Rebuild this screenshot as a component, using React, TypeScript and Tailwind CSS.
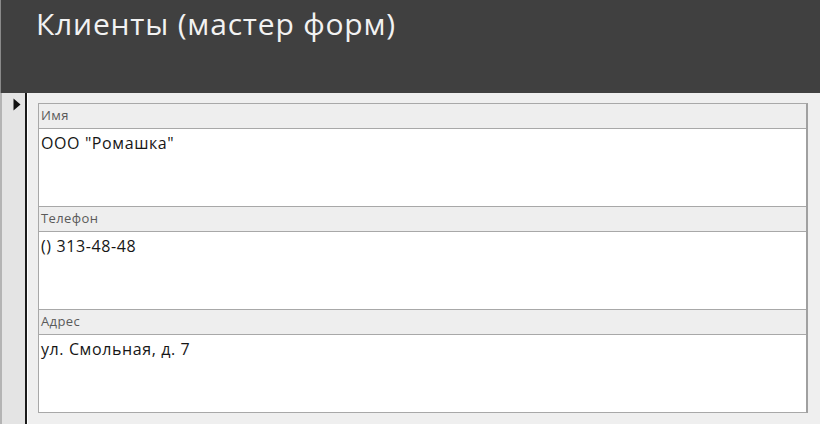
import React from 'react';

type Field = { label: string; value: string };

const fields: Field[] = [
  { label: 'Имя', value: 'ООО "Ромашка"' },
  { label: 'Телефон', value: '() 313-48-48' },
  { label: 'Адрес', value: 'ул. Смольная, д. 7' },
];

const FieldBlock = ({ label, value }: Field) => (
  <div>
    <div className="h-[25px] border-b border-[#a8a8a8] bg-[#eeeeee] pl-[2px] pt-[3px] text-[13px] leading-[17px] tracking-[0.4px] text-[#5a5a5a]">
      {label}
    </div>
    <div className="h-[78px] border-b border-[#a8a8a8] bg-white pl-[2px] pt-[4px] text-[16px] leading-[20px] tracking-[0.6px] text-[#161616]">
      {value}
    </div>
  </div>
);

export default function App() {
  return (
    <div
      className="flex h-[424px] w-[820px] flex-col overflow-hidden bg-[#efefef]"
      style={{ fontFamily: '"Open Sans", "Noto Sans", sans-serif' }}
    >
      {/* Form header */}
      <div className="h-[93px] shrink-0 border-l border-[#8a8a8a] bg-[#404040] pl-[35px] pt-[4px]">
        <h1 className="text-[30px] leading-[40px] font-normal tracking-[0.8px] text-[#f2f2f2]">
          Клиенты (мастер форм)
        </h1>
      </div>

      <div className="flex flex-1">
        {/* Record selector */}
        <div className="w-[27px] shrink-0 border-l-2 border-r-2 border-l-[#b4b4b4] border-r-[#1a1a1a] bg-[#e4e4e4] pl-[11px] pt-[5px]">
          <svg width="8" height="13" viewBox="0 0 8 13">
            <path d="M0.5 0.5 L7.5 6.5 L0.5 12.5 Z" fill="#111" />
          </svg>
        </div>

        {/* Detail */}
        <div className="flex-1 border-l border-white pl-[10px] pt-[10px]">
          <div className="w-[770px] border-t border-l border-[#a8a8a8] border-r-2 border-r-[#a0a0a0] bg-white">
            {fields.map(f => (
              <FieldBlock key={f.label} {...f} />
            ))}
          </div>
        </div>
      </div>
    </div>
  );
}
